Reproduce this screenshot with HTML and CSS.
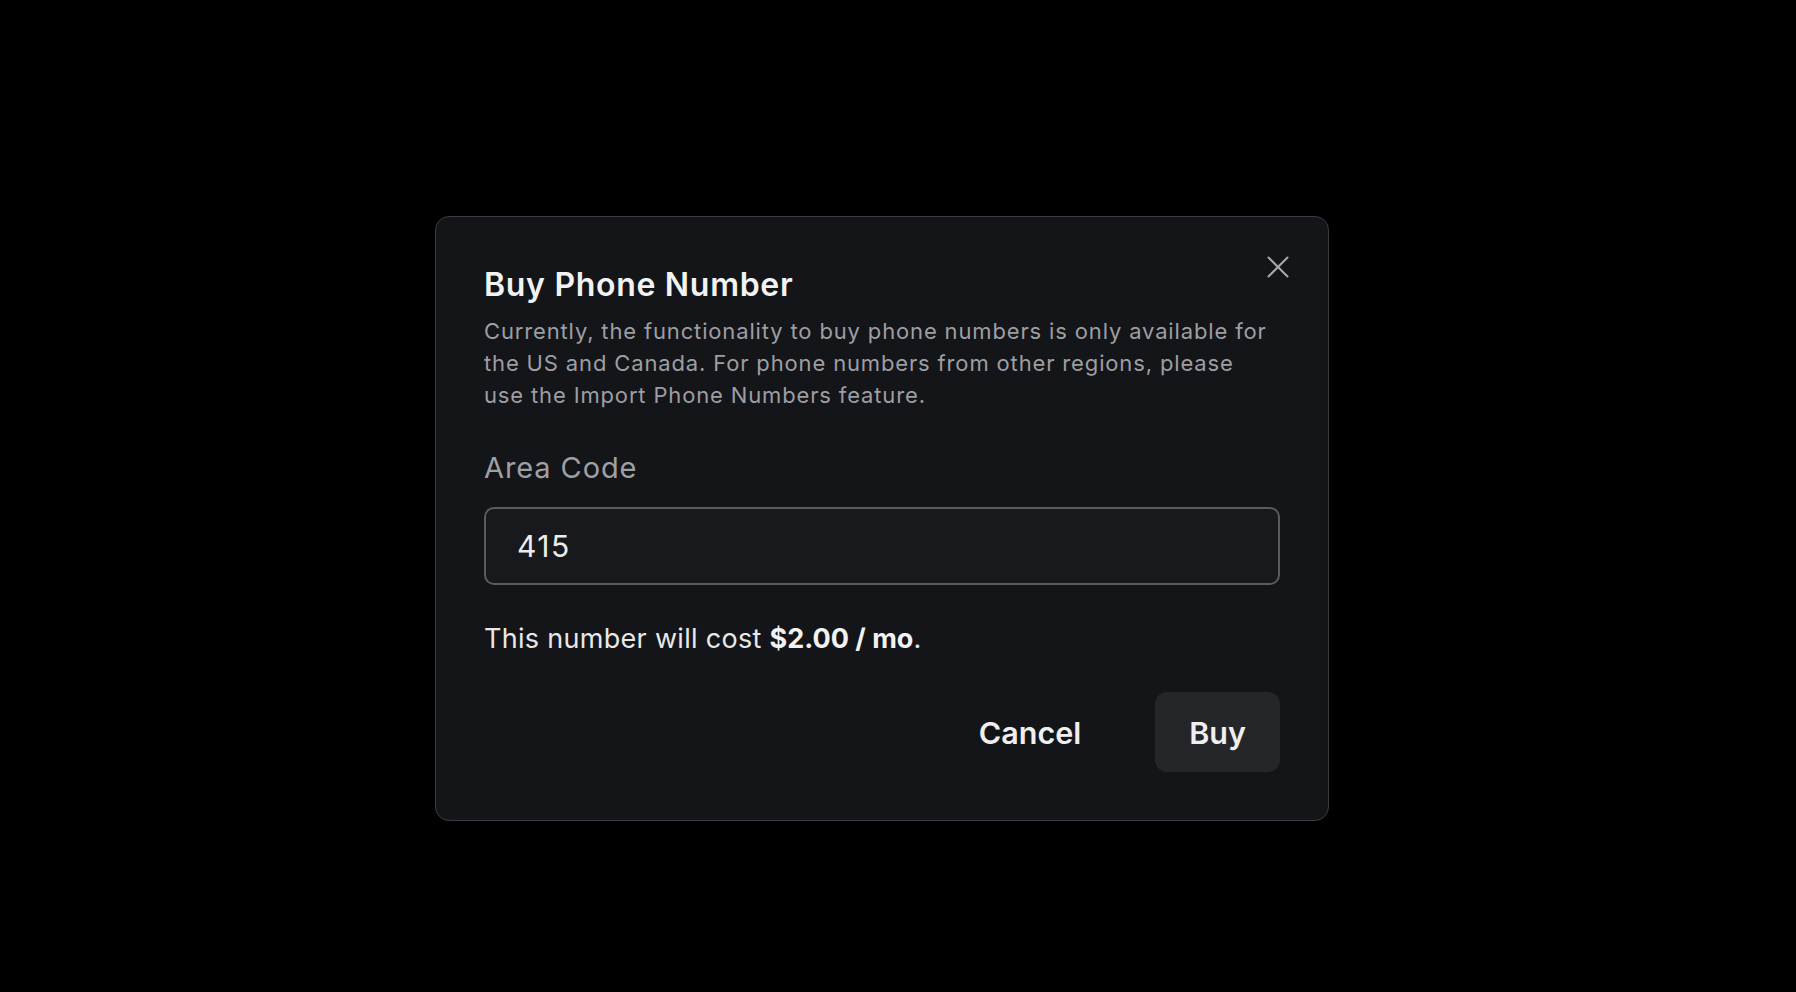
FILE: index.html
```html
<!DOCTYPE html>
<html lang="en">
<head>
<meta charset="utf-8">
<title>Buy Phone Number</title>
<link rel="stylesheet" href="styles.css">
</head>
<body>
<div class="page">
  <div class="dialog" role="dialog">
    <button class="close" aria-label="Close">
      <svg width="28" height="28" viewBox="0 0 28 28" fill="none" stroke="currentColor" stroke-width="2" stroke-linecap="round"><path d="M4.5 4.5 L23.5 23.5 M23.5 4.5 L4.5 23.5"/></svg>
    </button>
    <h2 class="title">Buy Phone Number</h2>
    <p class="desc">Currently, the functionality to buy phone numbers is only available for the US and Canada. For phone numbers from other regions, please use the Import Phone Numbers feature.</p>
    <label class="label">Area Code</label>
    <div class="input">415</div>
    <p class="cost">This number will cost <strong>$2.00 / mo</strong>.</p>
    <div class="actions">
      <button class="btn btn-ghost">Cancel</button>
      <button class="btn btn-primary">Buy</button>
    </div>
  </div>
</div>
</body>
</html>
```

FILE: styles.css
```css
* { box-sizing: border-box; }
html, body { margin: 0; padding: 0; background: #000; }
body { font-family: Inter, "Noto Sans", sans-serif; width: 1796px; height: 992px; overflow: hidden; }
.page { padding: 216px 0 0 435px; }
.dialog {
  position: relative;
  width: 894px;
  background: #141518;
  border: 1px solid #3b3c40;
  border-radius: 14px;
  padding: 48px;
  display: flex;
  flex-direction: column;
}
.close {
  position: absolute;
  top: 36px;
  right: 36px;
  width: 28px;
  height: 28px;
  padding: 0;
  border: 0;
  background: transparent;
  color: #a9a9ad;
  display: flex;
}
.title {
  margin: 0;
  font-size: 32px;
  line-height: 40px;
  font-weight: 600;
  color: #f2f2f2;
  letter-spacing: 0.7px;
}
.desc {
  margin: 10px 0 0;
  padding-right: 8px;
  font-size: 22px;
  line-height: 32px;
  color: #9d9ea4;
  letter-spacing: 0.85px;
}
.label {
  margin-top: 39px;
  font-size: 29px;
  line-height: 36px;
  color: #9fa0a4;
  letter-spacing: 0.9px;
}
.input {
  margin-top: 21px;
  height: 78px;
  border: 2px solid #5a5b5f;
  border-radius: 10px;
  background: #18191c;
  padding: 0 31px;
  display: flex;
  align-items: center;
  font-size: 30px;
  letter-spacing: 1.5px;
  color: #ececec;
}
.cost {
  margin: 36px 0 0;
  font-size: 27px;
  line-height: 36px;
  color: #e8e8e8;
  letter-spacing: 0.3px;
}
.cost strong { font-weight: 700; color: #f2f2f2; letter-spacing: 0; }
.actions {
  margin-top: 35px;
  display: flex;
  justify-content: flex-end;
  gap: 40px;
}
.btn {
  height: 80px;
  padding: 0 34px;
  border: 0;
  border-radius: 12px;
  font-family: inherit;
  font-size: 30.5px;
  font-weight: 600;
  color: #efefef;
  background: transparent;
  letter-spacing: 0;
}
.btn-primary { background: #25262a; }
```
